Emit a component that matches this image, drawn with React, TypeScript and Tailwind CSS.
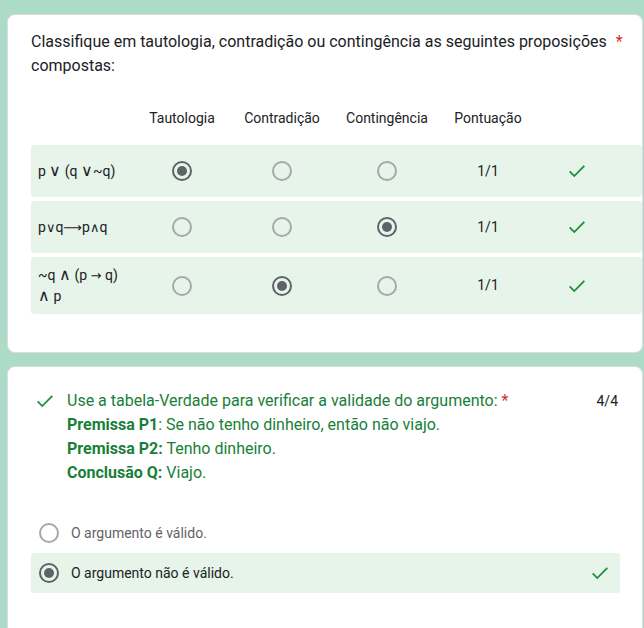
import React from "react";

const Check = ({ size = 22 }: { size?: number }) => (
  <svg width={size} height={size} viewBox="0 0 24 24" fill="none">
    <polyline points="4,12.5 9,17.5 20,6.5" stroke="#1e8e3e" strokeWidth="2" fill="none" />
  </svg>
);

const Radio = ({ on }: { on?: boolean }) =>
  on ? (
    <div className="w-5 h-5 rounded-full border-2 border-[#5f6368] flex items-center justify-center">
      <div className="w-[10px] h-[10px] rounded-full bg-[#5f6368]" />
    </div>
  ) : (
    <div className="w-5 h-5 rounded-full border-2 border-[#a5a8ac]" />
  );

const S = ({ children }: { children: React.ReactNode }) => (
  <span style={{ fontFamily: "'DejaVu Sans', sans-serif" }} className="text-[13px]">
    {children}
  </span>
);

const B = ({ children }: { children: React.ReactNode }) => (
  <span style={{ fontFamily: "'DejaVu Sans', sans-serif" }} className="text-[16px] leading-none font-light">
    {children}
  </span>
);

const rows: { label: React.ReactNode; sel: number }[] = [
  {
    label: (
      <>
        p <B>∨</B> (q <B>∨</B>~q)
      </>
    ),
    sel: 0,
  },
  {
    label: (
      <>
        p<S>∨</S>q<S>⟶</S>p<S>∧</S>q
      </>
    ),
    sel: 2,
  },
  {
    label: (
      <>
        ~q <B>∧</B> (p <S>→</S> q)
        <br />
        <B>∧</B> p
      </>
    ),
    sel: 1,
  },
];

const cols = "grid grid-cols-[101px_100px_100px_110px_92px_86px]";

export default function App() {
  return (
    <div
      className="w-[644px] h-[628px] overflow-hidden bg-[#acdcc8] pl-[7px] pt-[14px] text-[#202124]"
      style={{ fontFamily: "Roboto, 'Liberation Sans', sans-serif" }}
    >
      <div className="bg-white border border-[#dadce0] rounded-lg w-[636px] pt-[15px] pb-[38px] pl-[23px]">
        <div className="text-[16px] leading-6">
          <div className="whitespace-nowrap">
            Classifique em tautologia, contradição ou contingência as seguintes proposições
            <span className="text-[#d93025] ml-[9px]">*</span>
          </div>
          <div>compostas:</div>
        </div>
        <div className={`${cols} mt-[30px] text-[14px] leading-5 text-center`}>
          <div />
          <div>Tautologia</div>
          <div>Contradição</div>
          <div>Contingência</div>
          <div>Pontuação</div>
          <div />
        </div>
        <div className="flex flex-col gap-[4px] mt-[17px]">
          {rows.map((r, i) => (
            <div key={i} className={`${cols} bg-[#e6f4ea] rounded-[3px] min-h-[52px] items-center`}>
              <div className="pl-[7px] text-[14px] leading-5 py-2">{r.label}</div>
              {[0, 1, 2].map((c) => (
                <div key={c} className="flex justify-center">
                  <Radio on={r.sel === c} />
                </div>
              ))}
              <div className="text-center text-[14px]">1/1</div>
              <div className="flex justify-center">
                <Check />
              </div>
            </div>
          ))}
        </div>
      </div>

      <div className="bg-white border border-[#dadce0] rounded-lg w-[636px] mt-[13px] pt-[22px] pl-[23px] pb-10 h-[300px]">
        <div className="flex">
          <div className="w-[36px] flex justify-start pl-[3px] pt-[1px]">
            <Check />
          </div>
          <div className="flex-1 text-[16px] leading-6 text-[#188038]">
            <div>
              Use a tabela-Verdade para verificar a validade do argumento:{" "}
              <span className="text-[#d93025]">*</span>
            </div>
            <div>
              <b className="font-bold">Premissa P1</b>: Se não tenho dinheiro, então não viajo.
            </div>
            <div>
              <b className="font-bold">Premissa P2:</b> Tenho dinheiro.
            </div>
            <div>
              <b className="font-bold">Conclusão Q:</b> Viajo.
            </div>
          </div>
          <div className="text-[14px] leading-6 pr-[24px] text-[#202124]">4/4</div>
        </div>
        <div className="mt-[28px] w-[589px] flex flex-col">
          <div className="h-10 flex items-center pl-2 gap-3">
            <Radio />
            <span className="text-[14px] text-[#5f6368]">O argumento é válido.</span>
          </div>
          <div className="h-10 flex items-center pl-2 gap-3 bg-[#e6f4ea] rounded-[3px]">
            <Radio on />
            <span className="text-[14px] flex-1">O argumento não é válido.</span>
            <div className="pr-[9px] flex">
              <Check />
            </div>
          </div>
        </div>
      </div>
    </div>
  );
}
